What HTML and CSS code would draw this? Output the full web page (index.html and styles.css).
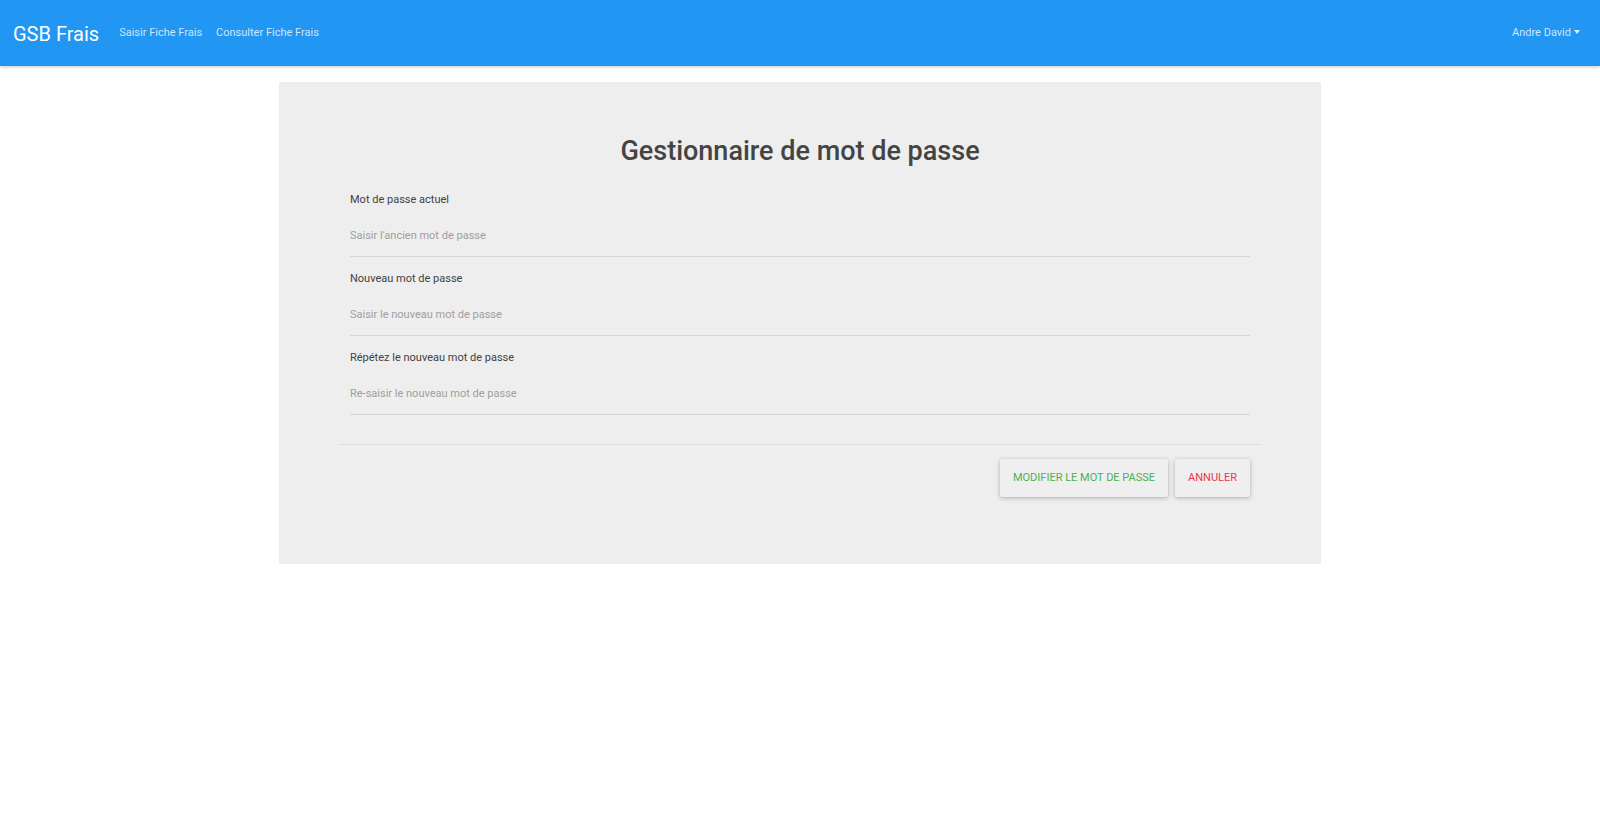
FILE: index.html
```html
<!DOCTYPE html>
<html lang="fr">
<head>
<meta charset="utf-8">
<title>GSB Frais</title>
<link rel="stylesheet" href="styles.css">
</head>
<body>
<nav class="navbar">
  <a class="brand" href="#">GSB Frais</a>
  <ul class="nav">
    <li><a class="nav-link" href="#">Saisir Fiche Frais</a></li>
    <li><a class="nav-link" href="#">Consulter Fiche Frais</a></li>
  </ul>
  <div class="nav-right">
    <a class="nav-link dropdown" href="#">Andre David<span class="caret"></span></a>
  </div>
</nav>
<main class="page">
  <section class="card">
    <h2 class="title">Gestionnaire de mot de passe</h2>
    <form class="form">
      <div class="fields">
        <div class="group">
          <label class="label" for="old">Mot de passe actuel</label>
          <input class="input" id="old" type="password" placeholder="Saisir l'ancien mot de passe">
        </div>
        <div class="group">
          <label class="label" for="new">Nouveau mot de passe</label>
          <input class="input" id="new" type="password" placeholder="Saisir le nouveau mot de passe">
        </div>
        <div class="group">
          <label class="label" for="rep">Répétez le nouveau mot de passe</label>
          <input class="input" id="rep" type="password" placeholder="Re-saisir le nouveau mot de passe">
        </div>
      </div>
      <hr class="sep">
      <div class="actions">
        <button type="submit" class="btn btn-success">MODIFIER LE MOT DE PASSE</button>
        <button type="button" class="btn btn-danger">ANNULER</button>
      </div>
    </form>
  </section>
</main>
</body>
</html>
```

FILE: styles.css
```css
* { box-sizing: border-box; }
html, body { margin: 0; padding: 0; }
body {
  font-family: Roboto, "Noto Sans", Arial, sans-serif;
  background: #ffffff;
  color: #333;
}
a { text-decoration: none; }

.navbar {
  height: 66px;
  background: #2196f3;
  display: flex;
  align-items: center;
  padding: 0 13px 0 13px;
  box-shadow: 0 1px 3px rgba(0,0,0,0.22);
  position: relative;
  z-index: 2;
}
.brand {
  color: #ffffff;
  font-size: 20px;
  line-height: 28px;
  margin-right: 13px;
  margin-top: 1px;
}
.nav {
  list-style: none;
  display: flex;
  margin: 0;
  padding: 0;
}
.nav-link {
  display: block;
  color: rgba(255,255,255,0.78);
  font-size: 11px;
  line-height: 16px;
  padding: 0 7px;
}
.nav-right { margin-left: auto; }
.caret {
  display: inline-block;
  width: 0; height: 0;
  margin-left: 3px;
  vertical-align: 2px;
  border-top: 4px solid rgba(255,255,255,0.85);
  border-left: 3.5px solid transparent;
  border-right: 3.5px solid transparent;
}

.page {
  padding-top: 16px;
  display: flex;
  justify-content: center;
}
.card {
  width: 1042px;
  background: #eeeeee;
  padding: 53px 59px 67px;
}
.title {
  margin: 0;
  text-align: center;
  font-size: 27px;
  line-height: 32px;
  font-weight: 500;
  color: #444;
}
.form { margin: 25px 0 0; }
.fields { padding: 0 12px; }
.group { margin-bottom: 14px; }
.group:last-child { margin-bottom: 0; }
.label {
  display: block;
  font-size: 11px;
  line-height: 16px;
  color: #424242;
  margin-bottom: 13px;
}
.input {
  display: block;
  width: 100%;
  height: 36px;
  font-family: inherit;
  font-size: 11px;
  line-height: 16px;
  padding: 6px 0 13px;
  border: 0;
  border-bottom: 1px solid #d6d6d6;
  background: transparent;
  color: #333;
  outline: none;
}
.input::placeholder { color: #9e9e9e; opacity: 1; }
.sep {
  margin: 29px 0 0;
  border: 0;
  border-top: 1px solid #e0e0e0;
  height: 0;
}
.actions {
  display: flex;
  justify-content: flex-end;
  gap: 7px;
  padding: 14px 12px 0;
}
.btn {
  font-family: inherit;
  font-size: 11px;
  line-height: 16px;
  height: 38px;
  padding: 11px 13px;
  border: 0;
  border-radius: 2px;
  background: #efefef;
  box-shadow: 0 1px 4px rgba(0,0,0,0.28);
  cursor: pointer;
}
.btn-success { color: #4caf50; }
.btn-danger { color: #e53950; }
```
